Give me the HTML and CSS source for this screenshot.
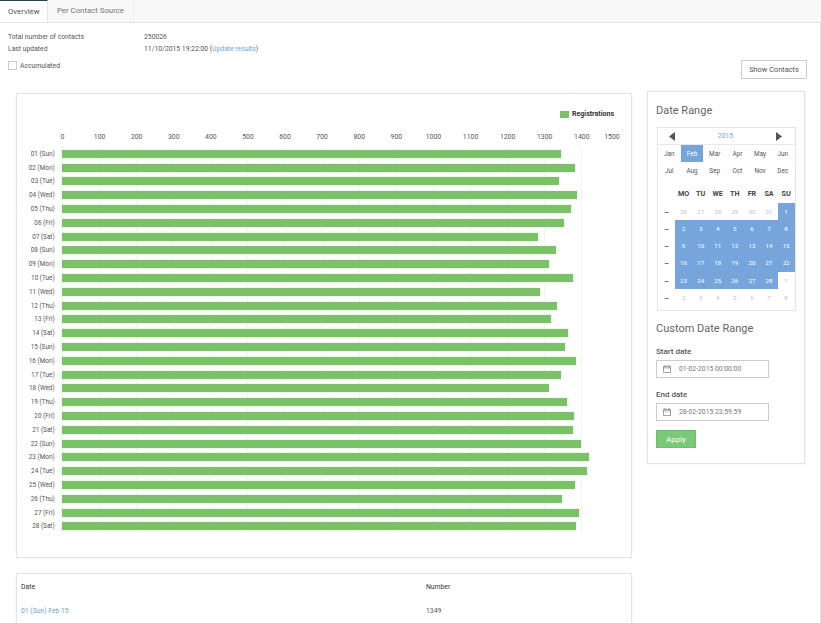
FILE: index.html
```html
<!DOCTYPE html>
<html lang="en">
<head>
<meta charset="utf-8">
<title>Overview</title>
<link rel="stylesheet" href="styles.css">
</head>
<body>
<nav class="tabs">
  <a class="tab active">Overview</a>
  <a class="tab">Per Contact Source</a>
</nav>
<main class="page">
  <section class="summary">
    <div class="facts">
      <div class="fact"><span class="fact-label">Total number of contacts</span><span>250026</span></div>
      <div class="fact"><span class="fact-label">Last updated</span><span>11/10/2015 19:22:00 (<a class="link">Update results</a>)</span></div>
      <label class="check"><span class="box"></span>Accumulated</label>
    </div>
    <button class="btn-contacts">Show Contacts</button>
  </section>
  <div class="columns">
    <div class="left">
      <section class="card chart">
        <div class="legend"><span class="swatch"></span><span class="legend-text">Registrations</span></div>
        <div class="axis">
          <span>0</span><span>100</span><span>200</span><span>300</span><span>400</span><span>500</span><span>600</span><span>700</span><span>800</span><span>900</span><span>1000</span><span>1100</span><span>1200</span><span>1300</span><span>1400</span><span class="axis-last">1500</span>
        </div>
        <div class="plot">
          <div class="row"><span class="day">01 (Sun)</span><div class="track"><div class="bar" style="width:499px"></div></div></div>
          <div class="row"><span class="day">02 (Mon)</span><div class="track"><div class="bar" style="width:513px"></div></div></div>
          <div class="row"><span class="day">03 (Tue)</span><div class="track"><div class="bar" style="width:497px"></div></div></div>
          <div class="row"><span class="day">04 (Wed)</span><div class="track"><div class="bar" style="width:515px"></div></div></div>
          <div class="row"><span class="day">05 (Thu)</span><div class="track"><div class="bar" style="width:509px"></div></div></div>
          <div class="row"><span class="day">06 (Fri)</span><div class="track"><div class="bar" style="width:502px"></div></div></div>
          <div class="row"><span class="day">07 (Sat)</span><div class="track"><div class="bar" style="width:476px"></div></div></div>
          <div class="row"><span class="day">08 (Sun)</span><div class="track"><div class="bar" style="width:494px"></div></div></div>
          <div class="row"><span class="day">09 (Mon)</span><div class="track"><div class="bar" style="width:487px"></div></div></div>
          <div class="row"><span class="day">10 (Tue)</span><div class="track"><div class="bar" style="width:511px"></div></div></div>
          <div class="row"><span class="day">11 (Wed)</span><div class="track"><div class="bar" style="width:478px"></div></div></div>
          <div class="row"><span class="day">12 (Thu)</span><div class="track"><div class="bar" style="width:495px"></div></div></div>
          <div class="row"><span class="day">13 (Fri)</span><div class="track"><div class="bar" style="width:489px"></div></div></div>
          <div class="row"><span class="day">14 (Sat)</span><div class="track"><div class="bar" style="width:506px"></div></div></div>
          <div class="row"><span class="day">15 (Sun)</span><div class="track"><div class="bar" style="width:503px"></div></div></div>
          <div class="row"><span class="day">16 (Mon)</span><div class="track"><div class="bar" style="width:514px"></div></div></div>
          <div class="row"><span class="day">17 (Tue)</span><div class="track"><div class="bar" style="width:499px"></div></div></div>
          <div class="row"><span class="day">18 (Wed)</span><div class="track"><div class="bar" style="width:487px"></div></div></div>
          <div class="row"><span class="day">19 (Thu)</span><div class="track"><div class="bar" style="width:505px"></div></div></div>
          <div class="row"><span class="day">20 (Fri)</span><div class="track"><div class="bar" style="width:512px"></div></div></div>
          <div class="row"><span class="day">21 (Sat)</span><div class="track"><div class="bar" style="width:511px"></div></div></div>
          <div class="row"><span class="day">22 (Sun)</span><div class="track"><div class="bar" style="width:519px"></div></div></div>
          <div class="row"><span class="day">23 (Mon)</span><div class="track"><div class="bar" style="width:527px"></div></div></div>
          <div class="row"><span class="day">24 (Tue)</span><div class="track"><div class="bar" style="width:525px"></div></div></div>
          <div class="row"><span class="day">25 (Wed)</span><div class="track"><div class="bar" style="width:513px"></div></div></div>
          <div class="row"><span class="day">26 (Thu)</span><div class="track"><div class="bar" style="width:500px"></div></div></div>
          <div class="row"><span class="day">27 (Fri)</span><div class="track"><div class="bar" style="width:517px"></div></div></div>
          <div class="row"><span class="day">28 (Sat)</span><div class="track"><div class="bar" style="width:514px"></div></div></div>
        </div>
      </section>
      <section class="card results">
        <div class="res-row res-head"><span class="res-date">Date</span><span>Number</span></div>
        <div class="res-row"><a class="link res-date">01 (Sun) Feb 15</a><span>1349</span></div>
      </section>
    </div>
    <aside class="card side">
      <h2 class="side-title">Date Range</h2>
      <div class="cal">
        <div class="cal-head">
          <svg class="arrow" viewBox="0 0 6 9"><path d="M6 0v9L0 4.5z"/></svg>
          <span class="year">2015</span>
          <svg class="arrow" viewBox="0 0 6 9"><path d="M0 0v9l6-4.5z"/></svg>
        </div>
        <div class="months">
          <span>Jan</span><span class="sel">Feb</span><span>Mar</span><span>Apr</span><span>May</span><span>Jun</span>
          <span>Jul</span><span>Aug</span><span>Sep</span><span>Oct</span><span>Nov</span><span>Dec</span>
        </div>
        <div class="days">
          <span></span><b>MO</b><b>TU</b><b>WE</b><b>TH</b><b>FR</b><b>SA</b><b>SU</b>
          <i>—</i><span class="off">26</span><span class="off">27</span><span class="off">28</span><span class="off">29</span><span class="off">30</span><span class="off">31</span><span class="on">1</span>
          <i>—</i><span class="on">2</span><span class="on">3</span><span class="on">4</span><span class="on">5</span><span class="on">6</span><span class="on">7</span><span class="on">8</span>
          <i>—</i><span class="on">9</span><span class="on">10</span><span class="on">11</span><span class="on">12</span><span class="on">13</span><span class="on">14</span><span class="on">15</span>
          <i>—</i><span class="on">16</span><span class="on">17</span><span class="on">18</span><span class="on">19</span><span class="on">20</span><span class="on">21</span><span class="on">22</span>
          <i>—</i><span class="on">23</span><span class="on">24</span><span class="on">25</span><span class="on">26</span><span class="on">27</span><span class="on">28</span><span class="off">1</span>
          <i>—</i><span class="off">2</span><span class="off">3</span><span class="off">4</span><span class="off">5</span><span class="off">6</span><span class="off">7</span><span class="off">8</span>
        </div>
      </div>
      <h2 class="side-title custom">Custom Date Range</h2>
      <div class="field-label">Start date</div>
      <div class="field">
        <svg class="cal-icon" viewBox="0 0 9 9"><path d="M.5 1.5h8v7h-8zM.5 3.2h8M2.3 0v2M6.7 0v2" fill="none" stroke="#777" stroke-width=".8"/></svg>
        <span>01-02-2015 00:00:00</span>
      </div>
      <div class="field-label second">End date</div>
      <div class="field">
        <svg class="cal-icon" viewBox="0 0 9 9"><path d="M.5 1.5h8v7h-8zM.5 3.2h8M2.3 0v2M6.7 0v2" fill="none" stroke="#777" stroke-width=".8"/></svg>
        <span>28-02-2015 23:59:59</span>
      </div>
      <button class="apply">Apply</button>
    </aside>
  </div>
</main>
</body>
</html>
```
FILE: styles.css
```css
* { box-sizing: border-box; }
html, body { margin: 0; height: 100%; overflow: hidden; }
body {
  display: flex;
  flex-direction: column;
  background: #f8f8f8;
  color: #555;
  font-family: Roboto, "Liberation Sans", sans-serif;
  font-size: 6.8px;
  line-height: 12px;
}
.link { color: #6f9fd8; }

.tabs {
  display: flex;
  flex: none;
  height: 23px;
  background: #f8f8f8;
  border-bottom: 1px solid #e4e4e4;
}
.tab {
  display: flex;
  align-items: center;
  height: 22px;
  padding: 0 9px;
  font-size: 7.8px;
  color: #777;
  border-right: 1px solid #eee;
}
.tab.active {
  width: 48px;
  padding: 0 8px;
  color: #555;
  background: #fff;
  border-top: 1px solid #23404f;
  border-right: 1px solid #e6e6e6;
}

.page {
  flex: 1;
  padding: 7px 13px 0 8px;
  background: #fff;
  border-right: 1px solid #e4e4e4;
}
.summary { display: flex; justify-content: space-between; height: 63px; }
.facts { display: flex; flex-direction: column; padding-top: 1px; }
.fact { display: flex; height: 12px; align-items: center; }
.fact-label { width: 136px; }
.check { display: flex; align-items: center; gap: 3px; margin-top: 5px; height: 11px; }
.box { width: 9px; height: 9px; border: 1px solid #ccc; background: #fff; }
.btn-contacts {
  width: 66px;
  height: 19px;
  margin-top: 30px;
  background: #fff;
  border: 1px solid #ccc;
  color: #555;
  font: 7.4px Roboto, sans-serif;
  padding: 0;
}

.columns { display: flex; align-items: flex-start; margin-top: -2px; padding-left: 8px; gap: 15px; }
.left { width: 616px; margin-top: 2px; flex: none; display: flex; flex-direction: column; gap: 15px; }
.card { background: #fff; border: 1px solid #e4e4e4; box-shadow: 0 0 1px #ddd; }

.chart { height: 465px; padding: 15px 17px 0 0; }
.legend { display: flex; justify-content: flex-end; align-items: center; gap: 3px; height: 10px; }
.swatch { width: 9px; height: 7px; background: #7bc168; }
.legend-text { font-size: 7px; font-weight: 700; color: #333; }
.axis { display: flex; margin: 12px 0 0 45.5px; height: 12px; width: 556.5px; justify-content: space-between; font-size: 6.9px; }
.axis span { width: 0; display: flex; justify-content: center; white-space: nowrap; }
.axis .axis-last { transform: translateX(-7px); }
.plot {
  margin-top: 3px;
  height: 389px;
  display: flex;
  flex-direction: column;
  padding-top: 1px;
  background-image: linear-gradient(#f0f0f0, #f0f0f0);
  background-size: 1px 100%;
  background-repeat: no-repeat;
  background-position: 45px 0;
}
.row { display: flex; height: 13.8px; align-items: center; flex: none; }
.day { width: 38px; text-align: right; font-size: 6.4px; margin-right: 7px; white-space: nowrap; }
.track {
  width: 557px;
  height: 13.8px;
  display: flex;
  align-items: center;
  background-image: repeating-linear-gradient(90deg, #f3f3f3 0, #f3f3f3 1px, transparent 1px, transparent 37.1px);
}
.bar { height: 8px; background: #7bc168; box-shadow: 0 0 1px #a9d89e; }

.results { height: 60px; padding-top: 1px; }
.res-row { display: flex; height: 24px; align-items: center; }
.res-date { width: 405px; margin-left: 4px; }
.res-head { color: #333; }

.side { width: 158px; height: 373px; padding: 12px 8px 0 8px; flex: none; }
.side-title { margin: 0; font-size: 11px; font-weight: 400; line-height: 14px; color: #666; }
.cal { width: 139px; height: 184px; margin: 9px 0 0 1px; border: 1px solid #e4e4e4; }
.cal-head { display: flex; justify-content: space-between; align-items: center; height: 17px; padding: 0 13px 0 11px; border-bottom: 1px solid #e8e8e8; }
.arrow { width: 6px; height: 9px; fill: #555; }
.year { color: #6f9fd8; font-size: 6.8px; }
.months { display: grid; grid-template-columns: repeat(6, 22.7px); grid-auto-rows: 17.3px; font-size: 6.4px; }
.months span { display: flex; align-items: center; justify-content: center; }
.months .sel { background: #76a5dc; color: #fff; }
.days { display: grid; grid-template-columns: 17px repeat(7, 17.1px); grid-auto-rows: 17.3px; margin-top: 6px; font-size: 6.2px; }
.days > * { display: flex; align-items: center; justify-content: center; font-style: normal; }
.days b { font-size: 7.2px; color: #444; }
.days i { color: #333; font-size: 6px; font-weight: 700; }
.days .off { color: #c4c4c4; }
.days .on { background: #76a5dc; color: #fff; }

.custom { margin-top: 11px; }
.field-label { margin-top: 10px; font-size: 8px; font-weight: 500; color: #555; line-height: 12px; }
.field-label.second { margin-top: 11px; }
.field {
  display: flex;
  align-items: center;
  width: 113px;
  height: 18px;
  margin-top: 2px;
  padding-left: 6px;
  border: 1px solid #ccc;
  color: #777;
}
.cal-icon { width: 8px; height: 8px; margin-right: 8px; }
.apply {
  display: block;
  width: 40px;
  height: 18px;
  margin-top: 9px;
  background: #7bc876;
  border: 1px solid #6fbf6a;
  color: #fff;
  font: 8px Roboto, sans-serif;
  padding: 0;
}
```
